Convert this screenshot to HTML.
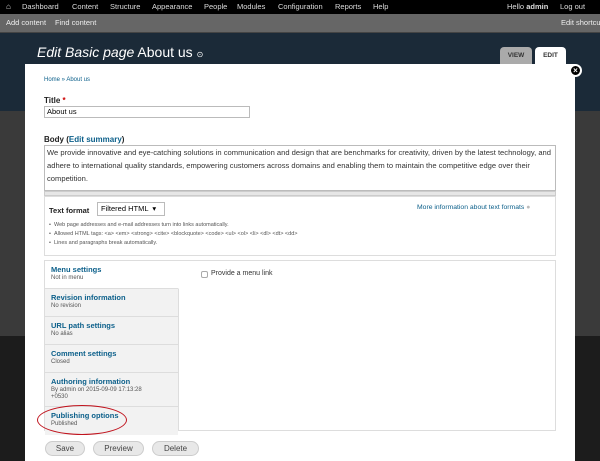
<!DOCTYPE html>
<html><head><style>
*{margin:0;padding:0;box-sizing:border-box}
body{width:600px;height:461px;overflow:hidden;position:relative;font-family:"Liberation Sans",sans-serif;background:#1c1c1c}
.abs{position:absolute}
#tb{left:0;top:0;width:600px;height:14px;background:#000;color:#ddd;font-size:7.5px;line-height:14px}
#tb span{position:absolute;top:0;white-space:nowrap}
#sc{left:0;top:14px;width:600px;height:19px;background:#666;color:#eee;font-size:7.5px;line-height:18px;border-bottom:1px solid #444}
#sc span{white-space:nowrap}
#hd{left:0;top:33px;width:600px;height:78px;background:#1b2a38}
#mid{left:0;top:111px;width:600px;height:225px;background:#3a3a3a}
#ov{left:25px;top:64px;width:550px;height:397px;background:#fff;overflow:visible}
.lbl{font-weight:bold;font-size:8px;color:#222}
.a{color:#0b5f8a}
.tab{top:47px;height:17px;font-size:6.5px;font-weight:bold;text-align:center;line-height:17px;border-radius:4px 4px 0 0}
.vt{border-bottom:1px solid #ddd;padding:4px 6px;height:28px;background:#f2f2f2}
.vt b{color:#0b5f8a;font-size:7.5px;display:block;line-height:10px}
.vt i{font-style:normal;font-size:6px;color:#555;display:block;line-height:7px}
.btn{top:441px;height:15px;border:1px solid #ccc;border-radius:8px;background:#e8e8e8;font-size:8px;color:#444;text-align:center;line-height:13px}
</style></head><body>
<div id="tb" class="abs">
<span style="left:6px;font-size:8px">&#8962;</span>
<span style="left:22px">Dashboard</span><span style="left:72px">Content</span><span style="left:110px">Structure</span><span style="left:152px">Appearance</span><span style="left:204px">People</span><span style="left:237px">Modules</span><span style="left:278px">Configuration</span><span style="left:335px">Reports</span><span style="left:373px">Help</span>
<span style="left:507px">Hello <b>admin</b></span><span style="left:560px">Log out</span>
</div>
<div id="sc" class="abs"><span style="position:absolute;left:6px">Add content</span><span style="position:absolute;left:55px">Find content</span><span style="position:absolute;left:561px">Edit shortcuts</span></div>
<div id="hd" class="abs"></div>
<div id="mid" class="abs"></div>
<div class="abs" style="left:37px;top:44px;color:#fff;font-size:14px"><i>Edit Basic page</i> About us <span style="font-size:8px">&#8857;</span></div>
<div class="abs tab" style="left:500px;width:32px;background:#aaa;color:#333">VIEW</div>
<div class="abs tab" style="left:535px;width:31px;background:#fff;color:#333">EDIT</div>
<div id="ov" class="abs">
 <div class="abs a" style="left:19px;top:13px;font-size:6px">Home » About us</div>
 <div class="abs lbl" style="left:19px;top:32px">Title <span style="color:#c00">*</span></div>
 <div class="abs" style="left:19px;top:42px;width:206px;height:12px;border:1px solid #bbb;font-size:7.5px;padding-left:2px;line-height:10px">About us</div>
 <div class="abs lbl" style="left:19px;top:71px">Body (<span class="a">Edit summary</span>)</div>
 <div class="abs" style="left:19px;top:81px;width:512px;height:46px;border:1px solid #bbb;font-size:7.6px;line-height:13px;padding:0 2px;color:#333">We provide innovative and eye-catching solutions in communication and design that are benchmarks for creativity, driven by the latest technology, and adhere to international quality standards, empowering customers across domains and enabling them to maintain the competitive edge over their competition.</div>
 <div class="abs" style="left:19px;top:127px;width:512px;height:5px;background:#e6e6e6;border:1px solid #ccc"></div>
 <div class="abs" style="left:19px;top:132px;width:512px;height:60px;border:1px solid #ddd"></div>
 <div class="abs lbl" style="left:24px;top:142px;font-size:7.5px">Text format</div>
 <div class="abs" style="left:72px;top:138px;width:68px;height:14px;border:1px solid #bbb;font-size:7.5px;line-height:12px;padding-left:3px">Filtered HTML &nbsp;▾</div>
 <div class="abs a" style="left:392px;top:140px;font-size:6.8px;white-space:nowrap">More information about text formats <span style="color:#bbb">●</span></div>
 <div class="abs" style="left:24px;top:157px;font-size:5.5px;line-height:9px;color:#555">• &nbsp;Web page addresses and e-mail addresses turn into links automatically.<br>• &nbsp;Allowed HTML tags: &lt;a&gt; &lt;em&gt; &lt;strong&gt; &lt;cite&gt; &lt;blockquote&gt; &lt;code&gt; &lt;ul&gt; &lt;ol&gt; &lt;li&gt; &lt;dl&gt; &lt;dt&gt; &lt;dd&gt;<br>• &nbsp;Lines and paragraphs break automatically.</div>
 <div class="abs" style="left:19px;top:196px;width:512px;height:171px;border:1px solid #ddd"></div>
 <div class="abs" style="left:20px;top:197px;width:134px;height:170px;border-right:1px solid #ddd">
  <div class="vt" style="background:#fff;border-right:1px solid #fff;margin-right:-1px"><b>Menu settings</b><i>Not in menu</i></div>
  <div class="vt"><b>Revision information</b><i>No revision</i></div>
  <div class="vt"><b>URL path settings</b><i>No alias</i></div>
  <div class="vt"><b>Comment settings</b><i>Closed</i></div>
  <div class="vt" style="height:34px"><b>Authoring information</b><i>By admin on 2015-09-09 17:13:28<br>+0530</i></div>
  <div class="vt" style="border:0"><b>Publishing options</b><i>Published</i></div>
 </div>
 <div class="abs" style="left:176px;top:207px;width:7px;height:7px;border:1px solid #aaa;border-radius:2px"></div>
 <div class="abs" style="left:186px;top:206px;font-size:7px;color:#333">Provide a menu link</div>
 <div class="abs" style="left:12px;top:341px;width:90px;height:30px;border:1.5px solid #c0141e;border-radius:50%"></div>
</div>
<div class="abs btn" style="left:45px;width:40px">Save</div>
<div class="abs btn" style="left:93px;width:51px">Preview</div>
<div class="abs btn" style="left:152px;width:47px">Delete</div>
<div class="abs" style="left:569px;top:64px;width:13px;height:13px;border-radius:50%;background:#000;border:2px solid #fff;color:#fff;font-size:8px;line-height:9px;text-align:center;font-weight:bold">×</div>
</body></html>
